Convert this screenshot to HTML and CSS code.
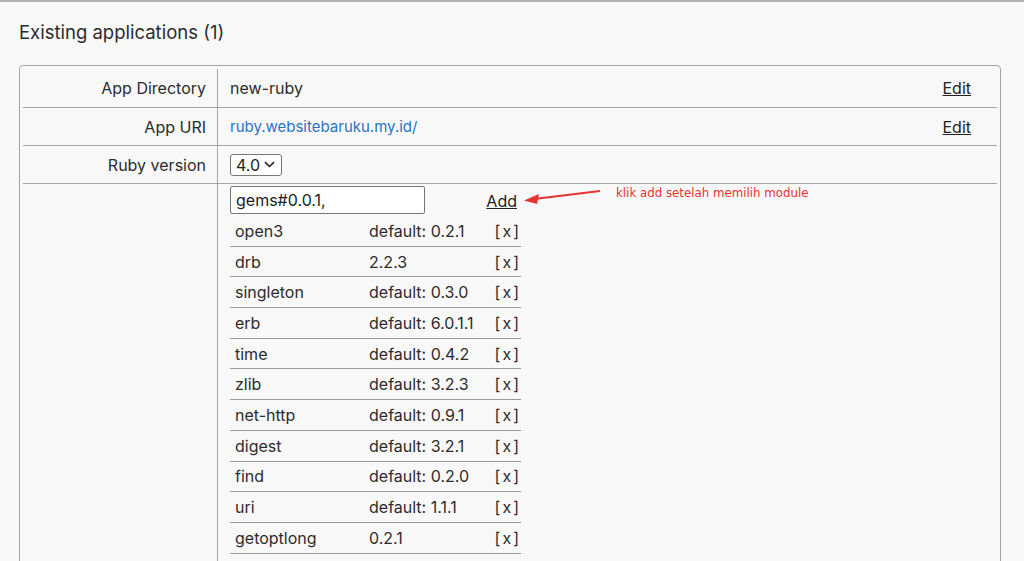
FILE: index.html
```html
<!DOCTYPE html>
<html lang="en">
<head>
  <meta charset="UTF-8" />
  <meta name="viewport" content="width=device-width, initial-scale=1.0" />
  <title>Ruby Applications</title>
  <link rel="stylesheet" href="styles.css">
</head>
<body>
  <div class="page">
    <h2 class="title">Existing applications (1)</h2>
    <div class="apps-box">
      <table class="apps">
        <tr>
          <th class="label">App Directory</th>
          <td class="value">
            <div class="line">
              <span>new-ruby</span>
              <a href="#" class="action">Edit</a>
            </div>
          </td>
        </tr>
        <tr>
          <th class="label">App URI</th>
          <td class="value">
            <div class="line">
              <a href="#" class="uri">ruby.websitebaruku.my.id/</a>
              <a href="#" class="action">Edit</a>
            </div>
          </td>
        </tr>
        <tr>
          <th class="label">Ruby version</th>
          <td class="value">
            <span class="select">4.0
              <svg width="11" height="7" viewBox="0 0 11 7"><path d="M1 1.2 L5.5 5.5 L10 1.2" fill="none" stroke="#222" stroke-width="1.6"/></svg>
            </span>
          </td>
        </tr>
        <tr class="modules-row">
          <th class="label"></th>
          <td class="value">
            <div class="modules">
              <div class="add-line">
                <input type="text" class="gem-input" value="gems#0.0.1,">
                <a href="#" class="action add">Add</a>
                <div class="note">
                  <svg width="82" height="20" viewBox="0 0 82 20"><path d="M78 3 L12 11" stroke="#e53232" stroke-width="2" fill="none"/><path d="M2 12.5 L17 6 L15 16 Z" fill="#e53232"/></svg>
                  <span>klik add setelah memilih module</span>
                </div>
              </div>
              <table class="gems">
                <tr><td class="gem-name">open3</td><td>default: 0.2.1</td><td class="gem-remove">[x]</td></tr>
                <tr><td class="gem-name">drb</td><td>2.2.3</td><td class="gem-remove">[x]</td></tr>
                <tr><td class="gem-name">singleton</td><td>default: 0.3.0</td><td class="gem-remove">[x]</td></tr>
                <tr><td class="gem-name">erb</td><td>default: 6.0.1.1</td><td class="gem-remove">[x]</td></tr>
                <tr><td class="gem-name">time</td><td>default: 0.4.2</td><td class="gem-remove">[x]</td></tr>
                <tr><td class="gem-name">zlib</td><td>default: 3.2.3</td><td class="gem-remove">[x]</td></tr>
                <tr><td class="gem-name">net-http</td><td>default: 0.9.1</td><td class="gem-remove">[x]</td></tr>
                <tr><td class="gem-name">digest</td><td>default: 3.2.1</td><td class="gem-remove">[x]</td></tr>
                <tr><td class="gem-name">find</td><td>default: 0.2.0</td><td class="gem-remove">[x]</td></tr>
                <tr><td class="gem-name">uri</td><td>default: 1.1.1</td><td class="gem-remove">[x]</td></tr>
                <tr><td class="gem-name">getoptlong</td><td>0.2.1</td><td class="gem-remove">[x]</td></tr>
                <tr><td class="gem-name">bundler</td><td>default: 2.7.2</td><td class="gem-remove">[x]</td></tr>
              </table>
            </div>
          </td>
        </tr>
      </table>
    </div>
  </div>
</body>
</html>
```

FILE: styles.css
```css
body {
  font-family: 'Inter', sans-serif;
  margin: 0;
  padding: 0;
  background-color: #f8f8f8;
  color: #2c2c2c;
  border-top: 2px solid #b4b4b4;
  overflow: hidden;
  height: 559px;
}
.page {
  padding: 0 23px 0 19px;
}
.title {
  font-size: 18.5px;
  font-weight: normal;
  margin: 0;
  padding: 19px 0 22px;
  line-height: 22px;
}
.apps-box {
  border: 1px solid #a4a4a4;
  border-radius: 4px;
  padding: 3px;
}
.apps {
  width: 100%;
  border-collapse: collapse;
  font-size: 16px;
}
.label {
  width: 183px;
  text-align: right;
  font-weight: normal;
  padding: 0 11px 0 0;
  border-right: 1px solid #a4a4a4;
  border-bottom: 1px solid #a4a4a4;
  height: 37px;
  vertical-align: middle;
}
.value {
  padding: 0 26px 0 12px;
  border-bottom: 1px solid #a4a4a4;
  height: 37px;
  vertical-align: middle;
}
.apps tr:first-child .label,
.apps tr:first-child .value {
  height: 38px;
}
.modules-row .label,
.modules-row .value {
  border-bottom: none;
  vertical-align: top;
}
.line {
  display: flex;
  justify-content: space-between;
  align-items: center;
}
.uri {
  color: #2a73c4;
  text-decoration: none;
  font-size: 15px;
}
.action {
  color: #222;
  text-decoration: underline;
}
.select {
  display: inline-flex;
  align-items: center;
  gap: 4px;
  border: 1px solid #777;
  border-radius: 3px;
  background: #fff;
  padding: 0 6px 0 5px;
  height: 20px;
  line-height: 20px;
  color: #222;
}
.modules {
  width: 291px;
  padding-top: 2px;
}
.add-line {
  position: relative;
  display: flex;
  justify-content: space-between;
  align-items: center;
  padding-right: 4px;
}
.gem-input {
  width: 195px;
  height: 28px;
  box-sizing: border-box;
  border: 1px solid #777;
  border-radius: 2px;
  font-family: 'Inter', sans-serif;
  font-size: 16px;
  color: #222;
  padding: 0 5px;
  background: #fff;
}
.add {
  margin-top: 2px;
}
.note {
  position: absolute;
  left: 292px;
  top: 2px;
  display: flex;
  align-items: flex-start;
  gap: 12px;
  color: #e53232;
  font-family: 'DejaVu Sans', sans-serif;
  font-size: 11.8px;
  white-space: nowrap;
}
.note span {
  margin-top: -2px;
}
.gems {
  width: 100%;
  border-collapse: collapse;
  font-size: 16px;
  margin-top: 2px;
}
.gems td {
  height: 29.7px;
  padding: 0 0 0 5px;
  border-bottom: 1px solid #9a9a9a;
  vertical-align: middle;
}
.gem-name {
  width: 129px;
}
.gem-remove {
  text-align: right;
  padding-right: 2px;
  letter-spacing: 2px;
}
```
